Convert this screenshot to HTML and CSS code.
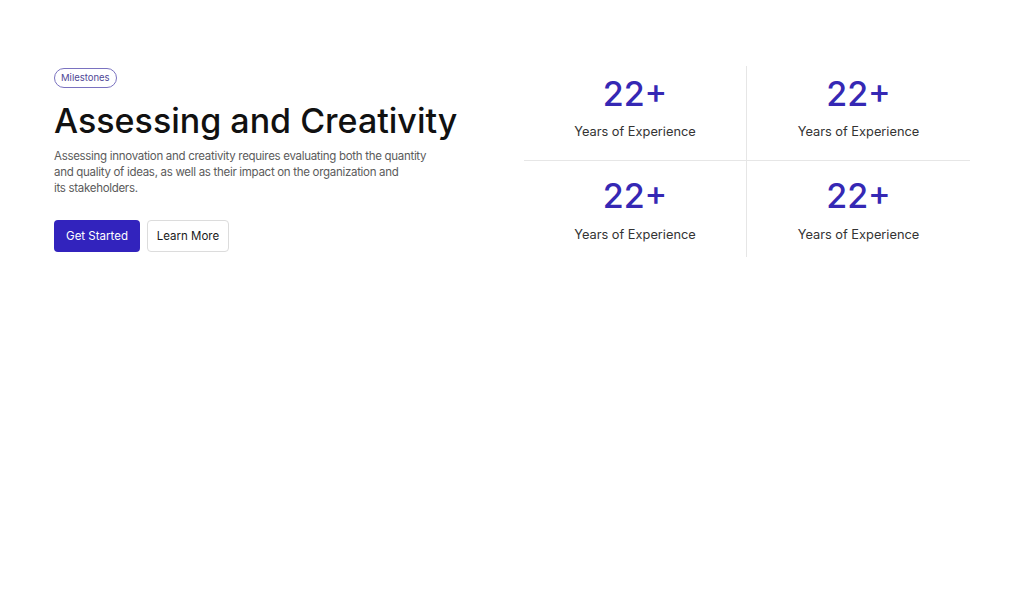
FILE: index.html
```html
<!DOCTYPE html>
<html lang="en">
<head>
<meta charset="utf-8">
<title>Milestones</title>
<link rel="stylesheet" href="styles.css">
</head>
<body>
<section class="milestones">
  <div class="intro">
    <span class="badge">Milestones</span>
    <h1 class="title">Assessing and Creativity</h1>
    <p class="lead">Assessing innovation and creativity requires evaluating both the quantity and quality of ideas, as well as their impact on the organization and<br>its stakeholders.</p>
    <div class="actions">
      <a class="btn btn-primary" href="#">Get Started</a>
      <a class="btn btn-outline" href="#">Learn More</a>
    </div>
  </div>
  <div class="stats">
    <div class="stat"><div class="stat-num">22+</div><div class="stat-label">Years of Experience</div></div>
    <div class="stat"><div class="stat-num">22+</div><div class="stat-label">Years of Experience</div></div>
    <div class="stat"><div class="stat-num">22+</div><div class="stat-label">Years of Experience</div></div>
    <div class="stat"><div class="stat-num">22+</div><div class="stat-label">Years of Experience</div></div>
  </div>
</section>
</body>
</html>
```
FILE: styles.css
```css
* { box-sizing: border-box; }
html, body { margin: 0; padding: 0; background: #fff; }
body {
  font-family: Inter, "Noto Sans", sans-serif;
  color: #111;
}
.milestones {
  display: flex;
  justify-content: space-between;
  align-items: flex-start;
  padding: 66px 54px 0 54px;
  width: 1024px;
}
.intro {
  width: 420px;
  padding-top: 2px;
}
.badge {
  display: inline-block;
  height: 20px;
  line-height: 18px;
  padding: 0 6px;
  border: 1px solid #7a72c0;
  border-radius: 10px;
  font-size: 9.5px;
  color: #4f4896;
  vertical-align: top;
}
.title {
  margin: 11px 0 0;
  font-size: 34px;
  line-height: 44px;
  font-weight: 500;
  letter-spacing: 0;
  color: #111;
}
.lead {
  margin: 5px 0 0;
  width: 380px;
  font-size: 11.5px;
  line-height: 16px;
  letter-spacing: -0.3px;
  color: #5b5b5b;
}
.actions {
  display: flex;
  gap: 7px;
  margin-top: 24px;
}
.btn {
  display: inline-flex;
  align-items: center;
  justify-content: center;
  height: 32px;
  border-radius: 4px;
  font-size: 11.5px;
  text-decoration: none;
}
.btn-primary {
  width: 86px;
  background: #3223bd;
  color: #fff;
}
.btn-outline {
  width: 82px;
  border: 1px solid #dcdcdc;
  color: #1a1a1a;
}
.stats {
  display: grid;
  grid-template-columns: 223px 223px;
  width: 446px;
}
.stat {
  height: 95px;
  display: flex;
  flex-direction: column;
  align-items: center;
  padding-top: 8px;
}
.stat:nth-child(1), .stat:nth-child(3) { border-right: 1px solid #e6e6e6; }
.stat:nth-child(1), .stat:nth-child(2) { border-bottom: 1px solid #e6e6e6; }
.stat:nth-child(3), .stat:nth-child(4) { padding-top: 15px; height: 96px; }
.stat-num {
  font-size: 34px;
  line-height: 40px;
  font-weight: 500;
  color: #3528b4;
}
.stat-label {
  margin-top: 9px;
  font-size: 12.8px;
  line-height: 18px;
  color: #333;
}
.stat:nth-child(3) .stat-label, .stat:nth-child(4) .stat-label { margin-top: 10px; }
```
